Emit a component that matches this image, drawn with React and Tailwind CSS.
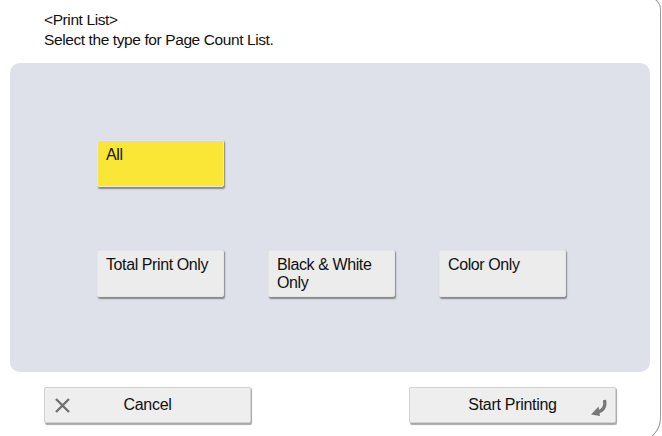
import React from 'react';

const font = { fontFamily: '"Liberation Sans", Arial, sans-serif' };

// Option tile inside the grey panel
const Tile = ({ label, active }) => (
    <button
        className={`w-[127px] h-[47px] px-2 pt-[5px] text-left leading-[18px] text-[16px] text-[#111] rounded-[2px] border border-[#e6e6e6] shadow-[1px_1.5px_1.5px_rgba(0,0,0,0.4)] flex items-start ${active ? 'bg-[#fae637]' : 'bg-[#ececec]'}`}
        style={font}
    >
        <span className="tracking-[-0.4px]">{label}</span>
    </button>
);

const CloseIcon = () => (
    <svg width="17" height="17" viewBox="0 0 17 17" className="shrink-0">
        <path d="M2 2 L15 15 M15 2 L2 15" stroke="#707070" strokeWidth="2.4" />
    </svg>
);

const ReturnIcon = () => (
    <svg width="20" height="20" viewBox="0 0 20 20">
        <path d="M15.5 2 C17 9 14 13 8 14" stroke="#777" strokeWidth="3.2" fill="none" />
        <path d="M9.5 8.5 L2 16.5 L11 18 Z" fill="#777" />
    </svg>
);

export default function App() {
    return (
        <div className="w-[662px] h-[436px] bg-white overflow-hidden" style={font}>
            <div className="-mt-[4px] w-[661px] h-[446px] border-r-[1.5px] border-t-[1.5px] border-b-[1.5px] border-[#9a9a9a] rounded-br-[24px] rounded-tr-[14px] flex flex-col">
                <div className="pl-[44px] pt-[13px] text-[15.5px] leading-[20px] text-[#111] tracking-[-0.4px]">
                    <div>&lt;Print List&gt;</div>
                    <div>Select the type for Page Count List.</div>
                </div>

                <div className="ml-[10px] mt-[13px] w-[640px] h-[309px] bg-[#dfe1ea] rounded-[10px] pl-[87px] pt-[77px] flex flex-col gap-[63px]">
                    <div className="flex">
                        <Tile label="All" active />
                    </div>
                    <div className="flex gap-[44px]">
                        <Tile label="Total Print Only" />
                        <Tile label={<>Black &amp; White<br />Only</>} />
                        <Tile label="Color Only" />
                    </div>
                </div>

                <div className="flex justify-between pl-[44px] pr-[44px] mt-[15px]">
                    <button className="relative w-[207px] h-[36px] bg-[#eeeeee] border border-[#d2d2d2] rounded-[2px] shadow-[1px_1.5px_1px_rgba(0,0,0,0.35)] flex items-center justify-center text-[16px] text-[#111]">
                        <span className="absolute left-[9px] top-[9px]"><CloseIcon /></span>
                        <span className="tracking-[-0.3px]">Cancel</span>
                    </button>
                    <button className="relative w-[207px] h-[36px] bg-[#eeeeee] border border-[#d2d2d2] rounded-[2px] shadow-[1px_1.5px_1px_rgba(0,0,0,0.35)] flex items-center justify-center text-[16px] text-[#111]">
                        <span className="tracking-[-0.3px]">Start Printing</span>
                        <span className="absolute right-[6px] top-[10px]"><ReturnIcon /></span>
                    </button>
                </div>
            </div>
        </div>
    );
}
